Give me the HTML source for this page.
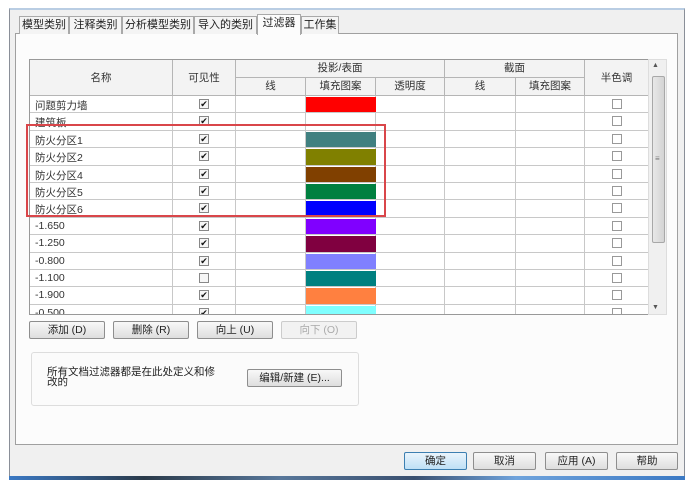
<!DOCTYPE html>
<html><head><meta charset="utf-8"><style>
*{margin:0;padding:0;box-sizing:border-box}
body{width:697px;height:489px;background:#fff;position:relative;overflow:hidden;font-family:"Liberation Sans","Noto Sans CJK SC",sans-serif;font-size:11px;color:#222}
.a{position:absolute}
.win{left:9px;top:8px;width:676px;height:471px;background:#f0f0f0;border:1px solid #8a8f98;border-top:2px solid #b9cde3}
.bar{left:9px;top:476px;width:676px;height:4px;background:linear-gradient(90deg,#3b79c4,#2a3a4a 20%,#58779a 40%,#3a5070 60%,#6fa3dc 75%,#3b79c4)}
.panel{left:15px;top:33px;width:663px;height:412px;background:#fcfcfc;border:1px solid #a0a0a0}
.tab{top:16px;height:18px;border:1px solid #a9a9a9;border-bottom:none;background:#f4f4f4;font-size:11px;line-height:16px;text-align:center}
.tbl{left:29px;top:59px;width:620px;height:256px;overflow:hidden;border:1px solid #999;border-right:none;background:#fff}
.h{background:#f3f3f3;border-right:1px solid #b5b5b5;border-bottom:1px solid #b5b5b5;text-align:center;font-size:10.5px;color:#333}
.r{left:0;width:620px;height:17.4px;border-bottom:1px solid #c8c8c8}
.c{top:0;height:100%;border-right:1px solid #c8c8c8}
.n{left:5px;top:2px;font-size:10.5px;color:#333}
.cb{width:10px;height:10px;border:1px solid #888;background:#f6f6f6;font-size:9px;line-height:8px;text-align:center;color:#111}
.btn{height:18px;border:1px solid #8e8e8e;border-radius:2px;background:linear-gradient(#f8f8f8,#dedede);text-align:center;font-size:10.5px;line-height:16px;color:#222}
</style></head><body>
<div class="a win"></div>
<div class="a bar"></div>
<div class="a panel"></div>
<div class="a tab" style="left:19px;width:50px">模型类别</div>
<div class="a tab" style="left:69px;width:53px">注释类别</div>
<div class="a tab" style="left:122px;width:72px">分析模型类别</div>
<div class="a tab" style="left:194px;width:63px">导入的类别</div>
<div class="a tab" style="left:257px;width:44px;top:14px;height:21px;background:#fcfcfc">过滤器</div>
<div class="a tab" style="left:301px;width:38px">工作集</div>

<div class="a tbl">
<div class="a h" style="left:0;top:0;width:143px;height:36px;line-height:36px">名称</div>
<div class="a h" style="left:143px;top:0;width:63px;height:36px;line-height:36px">可见性</div>
<div class="a h" style="left:206px;top:0;width:209px;height:18px;line-height:17px">投影/表面</div>
<div class="a h" style="left:415px;top:0;width:140px;height:18px;line-height:17px">截面</div>
<div class="a h" style="left:555px;top:0;width:64px;height:36px;line-height:36px">半色调</div>
<div class="a h" style="left:206px;top:18px;width:70px;height:18px;line-height:17px">线</div>
<div class="a h" style="left:276px;top:18px;width:70px;height:18px;line-height:17px">填充图案</div>
<div class="a h" style="left:346px;top:18px;width:69px;height:18px;line-height:17px">透明度</div>
<div class="a h" style="left:415px;top:18px;width:71px;height:18px;line-height:17px">线</div>
<div class="a h" style="left:486px;top:18px;width:69px;height:18px;line-height:17px">填充图案</div>
<div id="rows"></div>
</div>

<div class="a" style="left:648px;top:59px;width:19px;height:256px;background:#f0f0f0;border:1px solid #ddd"></div>
<div class="a" style="left:652px;top:62px;font-size:7px;color:#555">▲</div>
<div class="a" style="left:652px;top:304px;font-size:7px;color:#555">▼</div>
<div class="a" style="left:652px;top:76px;width:13px;height:167px;border:1px solid #a8a8a8;border-radius:2px;background:linear-gradient(90deg,#e8e8e8,#d4d4d4)"></div>
<div class="a" style="left:655px;top:154px;font-size:8px;color:#777">≡</div>

<div class="a" style="left:26px;top:124px;width:360px;height:93px;border:2px solid #d9464a"></div>

<div class="a btn" style="left:29px;top:321px;width:76px">添加 (D)</div>
<div class="a btn" style="left:113px;top:321px;width:76px">删除 (R)</div>
<div class="a btn" style="left:197px;top:321px;width:76px">向上 (U)</div>
<div class="a btn" style="left:281px;top:321px;width:76px;color:#aaa;border-color:#ccc;background:#f2f2f2">向下 (O)</div>

<div class="a" style="left:31px;top:352px;width:328px;height:54px;border:1px solid #ddd;border-radius:3px;background:#fbfbfb"></div>
<div class="a" style="left:47px;top:367px;font-size:10.5px;line-height:10px;color:#222">所有文档过滤器都是在此处定义和修<br>改的</div>
<div class="a btn" style="left:247px;top:369px;width:95px">编辑/新建 (E)...</div>

<div class="a btn" style="left:404px;top:452px;width:63px;border-color:#3c7fb1;background:linear-gradient(#e9f4fc,#bfe0f6)">确定</div>
<div class="a btn" style="left:473px;top:452px;width:63px">取消</div>
<div class="a btn" style="left:545px;top:452px;width:63px">应用 (A)</div>
<div class="a btn" style="left:616px;top:452px;width:62px">帮助</div>

<script>
var d=[["问题剪力墙",1,"#ff0000"],["建筑板",1,""],["防火分区1",1,"#408080"],["防火分区2",1,"#808000"],["防火分区4",1,"#804000"],["防火分区5",1,"#008040"],["防火分区6",1,"#0000ff"],["-1.650",1,"#8000ff"],["-1.250",1,"#800040"],["-0.800",1,"#8080ff"],["-1.100",0,"#008080"],["-1.900",1,"#ff8040"],["-0.500",1,"#80ffff"]];
var h="";
d.forEach(function(r,i){var t=36+17.4*i;
h+='<div class="a r" style="top:'+t+'px">';
[143,206,276,346,415,486,555].forEach(function(x){h+='<div class="a c" style="left:0;width:'+x+'px"></div>'});
h+='<div class="a n">'+r[0]+'</div>';
h+='<div class="a cb" style="left:169px;top:3px">'+(r[1]?'✔':'')+'</div>';
if(r[2])h+='<div class="a" style="left:276px;top:1px;width:70px;height:15.4px;background:'+r[2]+'"></div>';
h+='<div class="a cb" style="left:582px;top:3px;background:#fff;border-color:#999"></div></div>';});
document.getElementById("rows").innerHTML=h;
</script>
</body></html>
